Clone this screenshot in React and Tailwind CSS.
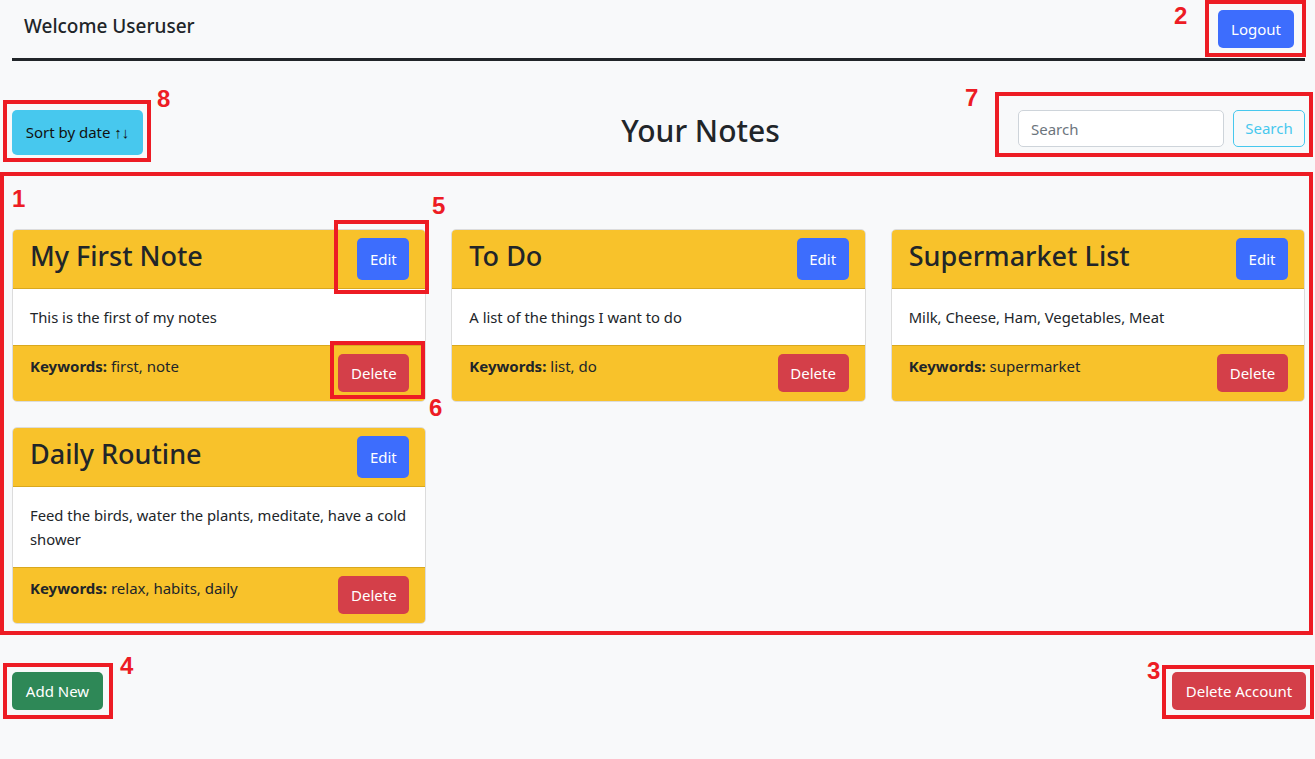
const notes = [
  {
    title: "My First Note",
    body: "This is the first of my notes",
    keywords: "first, note",
  },
  {
    title: "To Do",
    body: "A list of the things I want to do",
    keywords: "list, do",
  },
  {
    title: "Supermarket List",
    body: "Milk, Cheese, Ham, Vegetables, Meat",
    keywords: "supermarket",
  },
  {
    title: "Daily Routine",
    body: "Feed the birds, water the plants, meditate, have a cold shower",
    keywords: "relax, habits, daily",
  },
];

// red annotation boxes drawn over the screenshot
const boxes = [
  { cls: "left-[1205px] top-0 w-[101px] h-[57px]" },
  { cls: "left-[995px] top-[92px] w-[318px] h-[65px]" },
  { cls: "left-[3px] top-[100px] w-[148px] h-[62px]" },
  { cls: "left-0 top-[172px] w-[1313px] h-[463px]" },
  { cls: "left-[334px] top-[220px] w-[95px] h-[74px]" },
  { cls: "left-[330px] top-[341px] w-[95px] h-[58px]" },
  { cls: "left-[3px] top-[663px] w-[110px] h-[56px]" },
  { cls: "left-[1162px] top-[665px] w-[152px] h-[54px]" },
];

const labels = [
  { n: "2", cls: "left-[1174px] top-[4px]" },
  { n: "7", cls: "left-[965px] top-[86px]" },
  { n: "8", cls: "left-[157px] top-[87px]" },
  { n: "1", cls: "left-[12px] top-[187px] text-[20px]" },
  { n: "5", cls: "left-[432px] top-[194px]" },
  { n: "6", cls: "left-[429px] top-[396px]" },
  { n: "4", cls: "left-[120px] top-[654px]" },
  { n: "3", cls: "left-[1147px] top-[659px]" },
];

function NoteCard({ title, body, keywords }) {
  return (
    <div className="flex flex-col overflow-hidden rounded-[5px] border border-[#dcdcdc]">
      <div className="flex items-center justify-between border-b border-[#d9a81e] bg-[#f8c22b] px-4 py-2">
        <h3 className="pb-[6px] pl-[1px] text-[27px] font-medium leading-[36px] text-[#212529]">
          {title}
        </h3>
        <button className="h-[42px] w-[52px] rounded-[5px] bg-[#3d6dfd] text-[15px] text-white">
          Edit
        </button>
      </div>
      <div className="flex-1 bg-white py-4 pl-4 pr-3 text-[14.8px] leading-6 text-[#212529]">
        <p className="pl-[1px]">{body}</p>
      </div>
      <div className="flex items-start justify-between border-t border-[#d9a81e] bg-[#f8c22b] px-4 pb-[9px] pt-2">
        <p className="pl-[1px] text-[15px] leading-6 text-[#212529]">
          <span className="font-bold">Keywords:</span> {keywords}
        </p>
        <button className="h-[38px] w-[71px] rounded-[5px] bg-[#d43f49] text-[15px] text-white">
          Delete
        </button>
      </div>
    </div>
  );
}

export default function App() {
  return (
    <div
      className="relative min-h-screen bg-[#f8f9fa] text-[#212529]"
      style={{ fontFamily: "'Noto Sans', sans-serif" }}
    >
      <header className="ml-3 mr-[10px] flex h-[61px] items-start justify-between border-b-[3px] border-[#212529]">
        <h1 className="pl-3 pt-[12px] text-[19px] font-medium leading-7">
          Welcome Useruser
        </h1>
        <button className="mr-[11px] mt-[10px] h-[38px] w-[76px] rounded-[5px] bg-[#3d6dfd] text-[15px] text-white">
          Logout
        </button>
      </header>

      <div className="mt-[49px] flex items-start pl-3 pr-[10px]">
        <button className="h-[45px] w-[131px] rounded-[5px] bg-[#47c8ee] text-[15px] text-[#111]">
          Sort by date <span className="font-semibold">↑↓</span>
        </button>
        <h2 className="flex-1 pl-[240px] pt-[1px] text-center text-[30px] font-medium leading-10">
          Your Notes
        </h2>
        <div className="flex gap-[9px]">
          <input
            placeholder="Search"
            className="h-[37px] w-[206px] rounded-[5px] border border-[#ced4da] bg-white px-3 text-[15px] placeholder:text-[#6c757d]"
          />
          <button className="h-[37px] w-[72px] rounded-[5px] border border-[#47c8ee] text-[15px] text-[#47c8ee]">
            Search
          </button>
        </div>
      </div>

      <div className="mt-[74px] grid grid-cols-3 items-start gap-x-[25px] gap-y-[25px] pl-3 pr-[10px]">
        {notes.map((n) => (
          <NoteCard key={n.title} {...n} />
        ))}
      </div>

      <div className="mt-[48px] flex justify-between pb-12 pl-3 pr-[9px]">
        <button className="h-[38px] w-[91px] rounded-[5px] bg-[#2e8857] text-[15px] text-white">
          Add New
        </button>
        <button className="h-[38px] w-[134px] rounded-[5px] bg-[#d43f49] text-[15px] text-white">
          Delete Account
        </button>
      </div>

      {boxes.map((b, i) => (
        <div
          key={i}
          className={`pointer-events-none absolute border-4 border-[#ed1c24] ${b.cls}`}
        />
      ))}
      {labels.map((l) => (
        <span
          key={l.n}
          className={`pointer-events-none absolute text-[24px] font-bold leading-none text-[#ed1c24] ${l.cls}`}
          style={{ fontFamily: "'Liberation Sans', sans-serif" }}
        >
          {l.n}
        </span>
      ))}
    </div>
  );
}
